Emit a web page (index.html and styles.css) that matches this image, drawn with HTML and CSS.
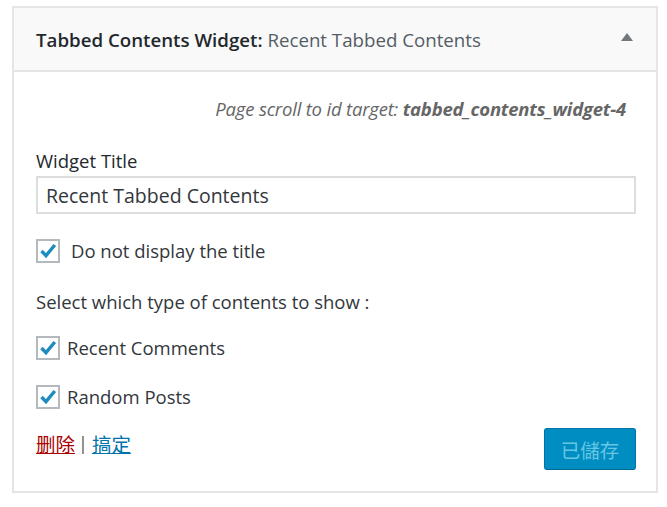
FILE: index.html
```html
<!DOCTYPE html>
<html>
<head>
<meta charset="utf-8">
<link rel="stylesheet" href="styles.css">
</head>
<body>
<div class="widget">
  <div class="widget-top">
    <h3 class="widget-title">Tabbed Contents Widget: <span class="in-title">Recent Tabbed Contents</span></h3>
    <span class="toggle"></span>
  </div>
  <div class="widget-inside">
    <p class="scroll-id">Page scroll to id target: <b>tabbed_contents_widget-4</b></p>
    <label class="field-label">Widget Title</label>
    <div class="input">Recent Tabbed Contents</div>
    <div class="check-row first">
      <span class="cb"><svg viewBox="0 0 20 20"><polyline points="3.5,10 8,14.6 16.8,4" fill="none" stroke="#1e8cbe" stroke-width="3.4"/></svg></span>
      <span class="cb-label wide">Do not display the title</span>
    </div>
    <p class="select-text">Select which type of contents to show :</p>
    <div class="check-row after-select">
      <span class="cb"><svg viewBox="0 0 20 20"><polyline points="3.5,10 8,14.6 16.8,4" fill="none" stroke="#1e8cbe" stroke-width="3.4"/></svg></span>
      <span class="cb-label">Recent Comments</span>
    </div>
    <div class="check-row">
      <span class="cb"><svg viewBox="0 0 20 20"><polyline points="3.5,10 8,14.6 16.8,4" fill="none" stroke="#1e8cbe" stroke-width="3.4"/></svg></span>
      <span class="cb-label">Random Posts</span>
    </div>
    <div class="actions">
      <div class="links"><a class="delete" href="#">删除</a><span class="sep">|</span><a class="done" href="#">搞定</a></div>
      <button class="save">已儲存</button>
    </div>
  </div>
</div>
</body>
</html>
```
FILE: styles.css
```css
html, body {
  margin: 0;
  padding: 0;
  background: #fff;
}
body {
  font-family: "Open Sans", "Noto Sans", "Noto Sans CJK TC", sans-serif;
  color: #444;
  font-size: 18.5px;
}
.widget {
  margin: 6px 0 0 12px;
  width: 646px;
  box-sizing: border-box;
  border: 2px solid #e5e5e5;
  background: #fff;
}
.widget-top {
  height: 62px;
  background: #f9f9f9;
  border-bottom: 2px solid #e5e5e5;
  display: flex;
  align-items: center;
  padding: 0 22px;
  justify-content: space-between;
}
.widget-title {
  margin: 0;
  font-size: 18.7px;
  font-weight: 600;
  color: #23282d;
}
.in-title {
  font-weight: 400;
  color: #555d66;
}
.toggle {
  width: 0;
  height: 0;
  border-left: 6px solid transparent;
  border-right: 6px solid transparent;
  border-bottom: 8px solid #72777c;
  margin-right: 1px;
  margin-top: -4px;
}
.widget-inside {
  padding: 0 20px 21px 22px;
  display: flex;
  flex-direction: column;
}
.scroll-id {
  margin: 24px 10px 0 0;
  text-align: right;
  font-style: italic;
  color: #666;
  font-size: 18.5px;
  line-height: 26px;
  letter-spacing: -0.2px;
}
.scroll-id b {
  font-weight: 700;
}
.field-label {
  margin-top: 26px;
  line-height: 26px;
  color: #23282d;
  font-size: 18.5px;
}
.input {
  margin-top: 2px;
  height: 38px;
  box-sizing: border-box;
  border: 2px solid #ddd;
  padding: 0 8px;
  display: flex;
  align-items: center;
  font-size: 19.5px;
  color: #32373c;
}
.check-row {
  display: flex;
  align-items: center;
  margin-top: 25px;
  height: 24px;
}
.check-row.after-select {
  margin-top: 21px;
}
.cb {
  width: 24px;
  height: 24px;
  box-sizing: border-box;
  border: 2px solid #b4b9be;
  background: #fff;
  display: flex;
  align-items: center;
  justify-content: center;
}
.cb svg {
  width: 20px;
  height: 20px;
  overflow: visible;
}
.cb-label {
  margin-left: 7px;
  color: #32373c;
  line-height: 26px;
}
.cb-label.wide {
  margin-left: 11px;
}
.select-text {
  margin: 26px 0 0;
  line-height: 26px;
  color: #32373c;
}
.actions {
  margin-top: 19px;
  display: flex;
  justify-content: space-between;
  align-items: center;
}
.links {
  font-family: "Noto Sans CJK TC", sans-serif;
  font-size: 19.5px;
  color: #32373c;
  margin-top: -12px;
  display: flex;
  align-items: center;
}
.sep {
  margin: 0 4px 0 3px;
  font-family: "Open Sans", sans-serif;
  font-size: 18px;
  color: #555;
}
.links a {
  text-decoration: underline;
}
.delete {
  color: #a00;
}
.done {
  color: #0073aa;
}
.save {
  width: 92px;
  height: 42px;
  background: #008ec2;
  border: 1px solid #0073aa;
  border-bottom-color: #006799;
  border-radius: 3px;
  color: #66c6e4;
  font-family: "Noto Sans CJK TC", sans-serif;
  font-size: 19.5px;
  padding: 0;
}
```
